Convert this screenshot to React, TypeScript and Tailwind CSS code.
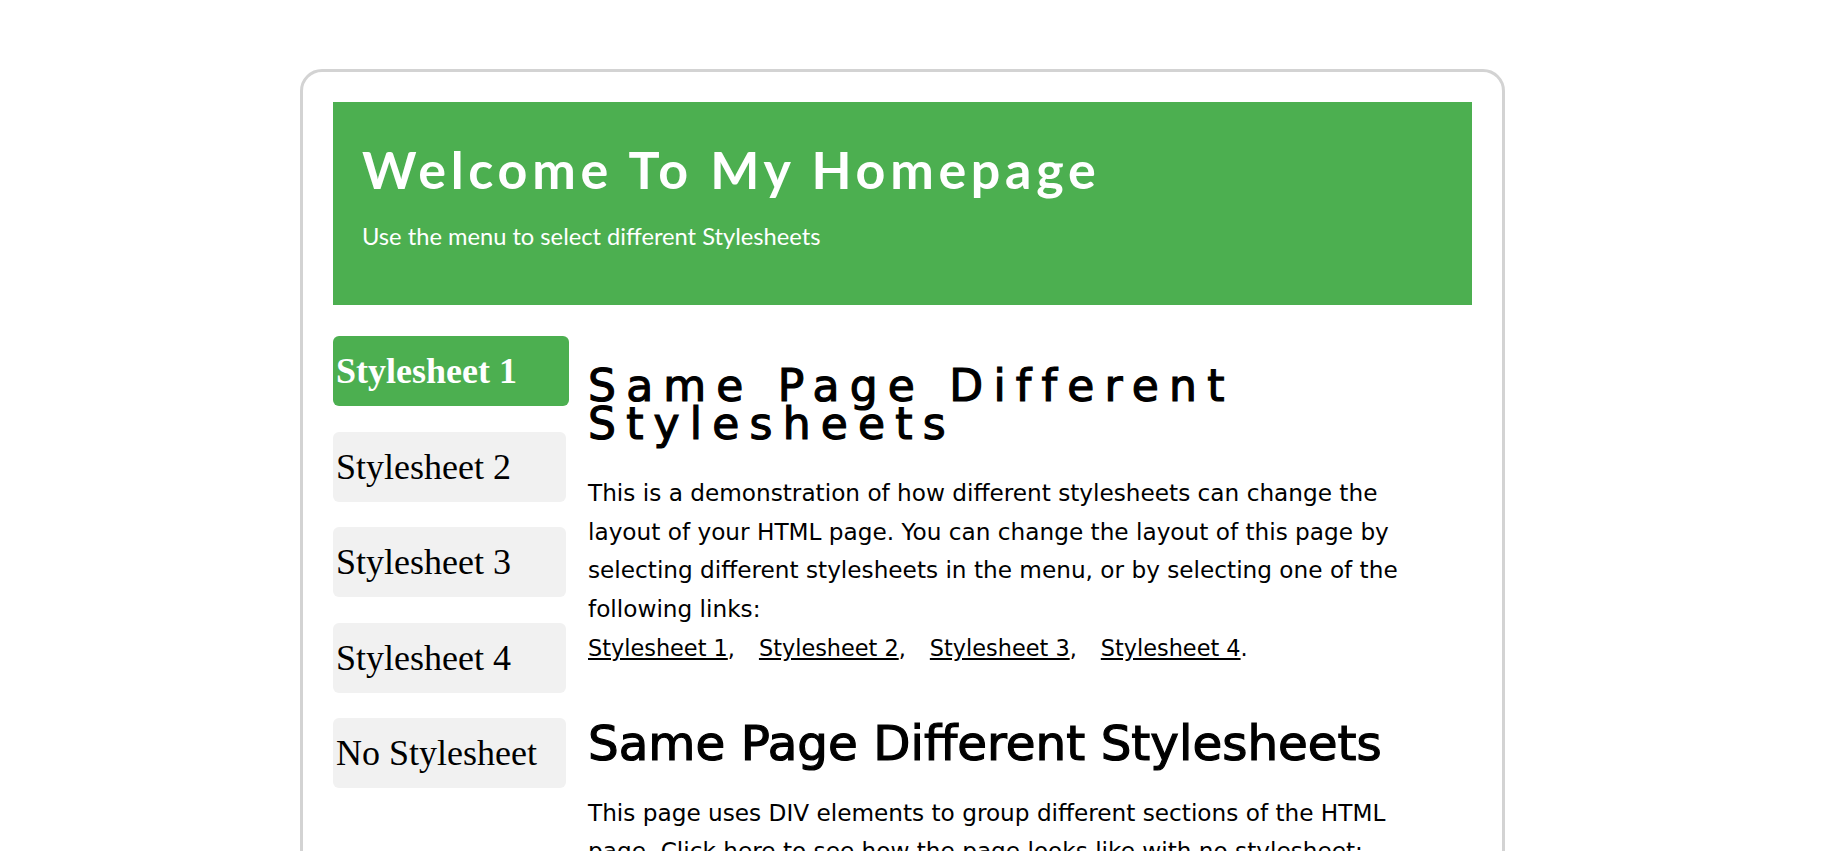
const menu = ["Stylesheet 1", "Stylesheet 2", "Stylesheet 3", "Stylesheet 4", "No Stylesheet"];
const links = ["Stylesheet 1", "Stylesheet 2", "Stylesheet 3", "Stylesheet 4"];

const App = () => {
  return (
    <div className="min-h-screen bg-white pt-[69px]">
      <div className="ml-[300px] w-[1205px] rounded-[22px] border-[3px] border-[#d3d3d3] p-[30px]">
        {/* header */}
        <header className="h-[203px] bg-[#4caf50] px-[29px] pt-[36px] text-white font-['Lato',sans-serif]">
          <h1 className="text-[52px] font-bold leading-[62px] tracking-[4.7px]">
            Welcome To My Homepage
          </h1>
          <p className="mt-[22px] text-[23.7px] leading-[28px]">
            Use the menu to select different Stylesheets
          </p>
        </header>

        <div className="mt-[31px] flex gap-[19px]">
          {/* menu */}
          <nav className="flex w-[236px] shrink-0 flex-col gap-[25.5px] font-['Liberation_Serif',serif] text-[36px]">
            {menu.map((item, i) =>
              i === 0 ? (
                <a
                  key={item}
                  className="flex h-[70px] w-[236px] items-center rounded-[6px] bg-[#4caf50] pl-[3px] font-bold text-white"
                >
                  {item}
                </a>
              ) : (
                <a
                  key={item}
                  className="flex h-[70px] w-[233px] items-center rounded-[6px] bg-[#f1f1f1] pl-[3px] text-black"
                >
                  {item}
                </a>
              )
            )}
          </nav>

          {/* content */}
          <main className="flex-1 pr-[45px] text-black font-['DejaVu_Sans',sans-serif]">
            <h2 className="mt-[31px] text-[44px] leading-[38px] tracking-[10.2px] [-webkit-text-stroke:1.2px_black]">
              Same Page Different Stylesheets
            </h2>
            <p className="mt-[31px] text-[23.2px] leading-[38.7px]">
              This is a demonstration of how different stylesheets can change the layout of your
              HTML page. You can change the layout of this page by selecting different stylesheets
              in the menu, or by selecting one of the following links:
              <br />
              <span className="text-[22.4px]">
                {links.map((l, i) => (
                  <span key={l}>
                    <a className="underline">{l}</a>
                    {i < links.length - 1 ? <span className="mr-[24px]">,</span> : "."}
                  </span>
                ))}
              </span>
            </p>

            <h2 className="mt-[47px] text-[48.4px] leading-[56px] [-webkit-text-stroke:1.2px_black]">
              Same Page Different Stylesheets
            </h2>
            <p className="mt-[23px] text-[23.2px] leading-[38.7px]">
              This page uses DIV elements to group different sections of the HTML page. Click here
              to see how the page looks like with no stylesheet:
              <br />
              <a className="underline">No Stylesheet</a>.
            </p>
          </main>
        </div>
      </div>
    </div>
  );
};

export default App;
